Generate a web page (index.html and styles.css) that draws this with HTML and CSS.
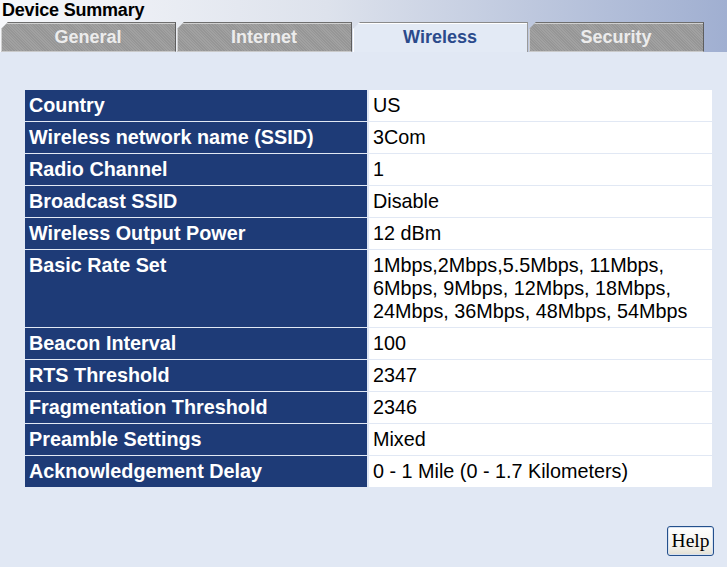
FILE: index.html
```html
<!DOCTYPE html>
<html>
<head>
<meta charset="utf-8">
<title>Device Summary</title>
<link rel="stylesheet" href="styles.css">
</head>
<body>
<div class="header">
  <div class="title">Device Summary</div>
  <div class="tabs">
    <div class="tab">General</div>
    <div class="tab">Internet</div>
    <div class="tab active">Wireless</div>
    <div class="tab">Security</div>
  </div>
</div>
<div class="content">
  <table class="summary">
    <tr><th>Country</th><td>US</td></tr>
    <tr><th>Wireless network name (SSID)</th><td>3Com</td></tr>
    <tr><th>Radio Channel</th><td>1</td></tr>
    <tr><th>Broadcast SSID</th><td>Disable</td></tr>
    <tr><th>Wireless Output Power</th><td>12 dBm</td></tr>
    <tr><th>Basic Rate Set</th><td>1Mbps,2Mbps,5.5Mbps, 11Mbps,<br>6Mbps, 9Mbps, 12Mbps, 18Mbps,<br>24Mbps, 36Mbps, 48Mbps, 54Mbps</td></tr>
    <tr><th>Beacon Interval</th><td>100</td></tr>
    <tr><th>RTS Threshold</th><td>2347</td></tr>
    <tr><th>Fragmentation Threshold</th><td>2346</td></tr>
    <tr><th>Preamble Settings</th><td>Mixed</td></tr>
    <tr><th>Acknowledgement Delay</th><td>0 - 1 Mile (0 - 1.7 Kilometers)</td></tr>
  </table>
  <div class="actions">
    <button class="help">Help</button>
  </div>
</div>
</body>
</html>
```
FILE: styles.css
```css
html, body {
  margin: 0;
  padding: 0;
  background: #e1e8f4;
  font-family: "Liberation Sans", Arial, sans-serif;
}
body {
  width: 727px;
  height: 567px;
  overflow: hidden;
}
.header {
  height: 52px;
  background: linear-gradient(to right, #f7f8fb 0%, #dde2ec 45%, #a0afd1 100%);
}
.title {
  height: 22px;
  padding-left: 2px;
  font-size: 18px;
  font-weight: bold;
  line-height: 21px;
  color: #000;
  letter-spacing: -0.2px;
}
.tabs {
  display: flex;
  gap: 1px;
  padding-left: 1px;
  height: 30px;
}
.tab {
  box-sizing: border-box;
  width: 175px;
  height: 30px;
  background-color: #9c9c9c;
  background-image: repeating-linear-gradient(45deg, rgba(255,255,255,0.05) 0 1px, rgba(0,0,0,0.04) 1px 2px);
  border-top: 1px solid #6e6e6e;
  border-right: 1px solid #5e5e5e;
  border-bottom: 1px solid #c9c9c9;
  box-shadow: inset 1px 1px 0 #d0d0d0;
  clip-path: polygon(7px 0, 100% 0, 100% 100%, 0 100%, 0 7px);
  color: #ececec;
  font-size: 18px;
  font-weight: bold;
  text-align: center;
  line-height: 28px;
}
.tab.active {
  background: #e3eaf5;
  border-top: 1px solid #8a8a8a;
  border-right: 1px solid #9a9a9a;
  border-bottom: none;
  box-shadow: inset 1px 1px 0 #ffffff;
  color: #2b4a8b;
}
.content {
  padding: 37px 13px 0 23px;
}
.summary {
  border-collapse: separate;
  border-spacing: 2px 1px;
  width: 691px;
  font-size: 19.8px;
}
.summary th,
.summary td {
  padding: 4px 4px 4px 4px;
  line-height: 23px;
  vertical-align: top;
  text-align: left;
}
.summary th {
  width: 334px;
  background: #1e3b77;
  color: #ffffff;
  font-weight: bold;
}
.summary td {
  background: #ffffff;
  color: #000000;
  font-weight: normal;
}
.actions {
  display: flex;
  justify-content: flex-end;
  margin-top: 38px;
}
.help {
  box-sizing: border-box;
  width: 47px;
  height: 30px;
  padding: 0;
  font-family: "Liberation Serif", "Times New Roman", serif;
  font-size: 19.5px;
  color: #000;
  background: linear-gradient(to bottom, #ffffff 0%, #f3f2ec 70%, #e2dfd3 100%);
  border: 1px solid #24508c;
  border-radius: 3px;
  box-shadow: inset 0 0 0 1px #d8e2f0;
}
```
